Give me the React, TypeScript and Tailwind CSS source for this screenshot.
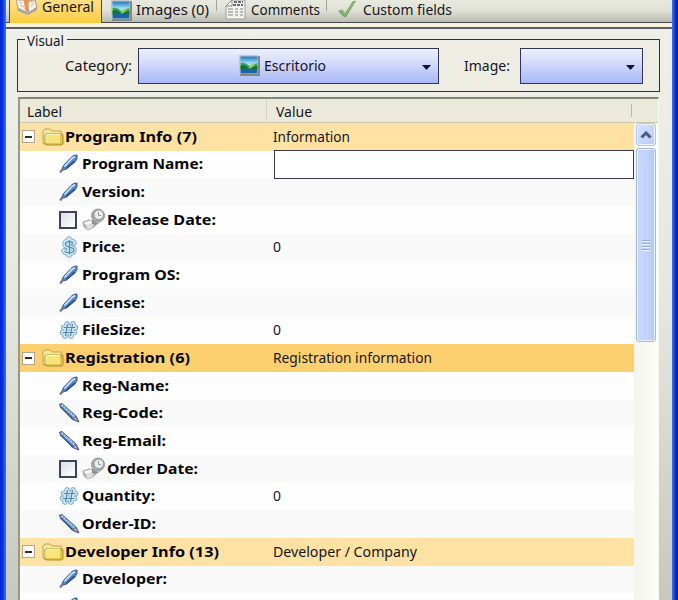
import type { ReactNode } from 'react'

type IconName = 'pen' | 'pencil' | 'date' | 'price' | 'hash'

type Row = {
  label: string
  value?: string
  valueWidth?: number
  icon?: IconName
  group?: boolean
  selected?: boolean
  editing?: boolean
  width: number
}

const rows: Row[] = [
  { label: 'Program Info (7)', value: 'Information', valueWidth: 77, group: true, width: 132 },
  { label: 'Program Name:', icon: 'pen', editing: true, width: 121 },
  { label: 'Version:', icon: 'pen', width: 63 },
  { label: 'Release Date:', icon: 'date', width: 109 },
  { label: 'Price:', icon: 'price', value: '0', valueWidth: 8, width: 43 },
  { label: 'Program OS:', icon: 'pen', width: 98 },
  { label: 'License:', icon: 'pen', width: 63 },
  { label: 'FileSize:', icon: 'hash', value: '0', valueWidth: 8, width: 63 },
  { label: 'Registration (6)', value: 'Registration information', valueWidth: 159, group: true, selected: true, width: 125 },
  { label: 'Reg-Name:', icon: 'pen', width: 87 },
  { label: 'Reg-Code:', icon: 'pencil', width: 81 },
  { label: 'Reg-Email:', icon: 'pencil', width: 84 },
  { label: 'Order Date:', icon: 'date', width: 91 },
  { label: 'Quantity:', icon: 'hash', value: '0', valueWidth: 8, width: 73 },
  { label: 'Order-ID:', icon: 'pencil', width: 74 },
  { label: 'Developer Info (13)', value: 'Developer / Company', valueWidth: 144, group: true, width: 154 },
  { label: 'Developer:', icon: 'pen', width: 85 },
  { label: '', icon: 'pen', width: 0 },
]

// Text set to an exact width, so labels keep the metrics of the native dialog font
function Label({ children, width, bold, y = 16 }: { children: string; width: number; bold?: boolean; y?: number }) {
  return (
    <svg width={width + 1} height="22" className="block shrink-0 overflow-visible">
      <text x="0" y={y} textLength={width} lengthAdjust="spacingAndGlyphs" fontSize="15" fontWeight={bold ? 700 : 400} fill={bold ? '#08080c' : '#15151c'}>
        {children}
      </text>
    </svg>
  )
}

function PictureIcon() {
  return (
    <svg width="21" height="21" viewBox="0 0 21 21" className="block shrink-0">
      <defs>
        <linearGradient id="sky" x1="0" y1="0" x2="0" y2="1">
          <stop offset="0" stopColor="#1c78c4" />
          <stop offset=".35" stopColor="#8fd2ee" />
          <stop offset=".6" stopColor="#d4f1f0" />
        </linearGradient>
      </defs>
      <path d="M1 1h20v20H1z" fill="#858984" />
      <path d="M0 0h19v19H0z" fill="#c3c8c2" />
      <path d="M1.500 1.500h17v17h-17z" fill="url(#sky)" />
      <path d="M1.500 8c4-1 6 1 9 3l8-3v6h-17z" fill="#3ba556" />
      <path d="M1.500 11c3-2 5-1 8 2 3 0 5-2 9-2v4h-17z" fill="#14733b" />
      <path d="M10 12c2-3 4-3 7-4l-3 4-4 2z" fill="#8ccf58" />
      <path d="M1.500 15c5-1 11-2 17 0v3.500h-17z" fill="#1c63a8" />
    </svg>
  )
}

function Folder() {
  return (
    <svg width="22" height="20" viewBox="0 0 22 20" className="block shrink-0">
      <path d="M1 16V4l2-2h5l2 2h9l1 2v9l-2 2H2z" fill="#f5e79c" stroke="#bda450" />
      <path d="M4 7h15l2 1v9l-2 1H5l-2-1V8z" fill="#e3c548" stroke="#a88d2f" />
      <path d="M4 8h14v8H5z" fill="#f8e47c" />
      <path d="M4 7.500h14M4 8v8" stroke="#fffac8" />
    </svg>
  )
}

function FieldIcon({ name }: { name: IconName }) {
  if (name === 'pen') {
    return (
      <svg width="20" height="20" viewBox="0 0 20 20" className="block shrink-0">
        <path d="M1.500 18l3-6.500L12 3.500l2.500-2 3.500-.5v3.500L16 8l-8.500 7-3.500 1z" fill="#5c86c4" stroke="#3a5690" />
        <path d="M5.500 12.500L13 4.500l3-2" stroke="#c4e4f7" strokeWidth="1.8" fill="none" />
        <path d="M7 14.500L15.500 7" stroke="#2f4f91" strokeWidth="1.500" />
        <path d="M1 18.500l3.500-4" stroke="#6f7a90" strokeWidth="2" />
      </svg>
    )
  }
  if (name === 'pencil') {
    return (
      <svg width="21" height="20" viewBox="0 0 21 20" className="block shrink-0">
        <path d="M0 1.500L3 .5 17 13l3 6-6.500-2.500z" fill="#6f8ec4" stroke="#4a5a88" />
        <path d="M2.500 2L16 14" stroke="#a9dbe4" strokeWidth="2" strokeDasharray="2 1" />
        <path d="M1 3.500l13 12.500" stroke="#3f5793" strokeWidth="1.500" />
        <path d="M14.500 16l2-2 2.500 4.500z" fill="#dcdde6" stroke="#56607e" strokeWidth=".7" />
      </svg>
    )
  }
  if (name === 'date') {
    return (
      <svg width="24" height="24" viewBox="0 0 24 24" className="block shrink-0">
        <path d="M1 14l6-2 5 1 3 2-3 4-6 3-4-3z" fill="#bdbdba" stroke="#a1a2a0" />
        <path d="M1.500 14.500l7-2 3.500 2-7 3z" fill="#f5f5f3" />
        <path d="M4.500 18l7.500-3-1.500 4.500-5 2.500z" fill="#dededb" />
        <path d="M10 9c0 5 5 7 9 5l-5 3-4-1z" fill="#8a8e8d" />
        <circle cx="16" cy="7.500" r="6.500" fill="#a5abaa" stroke="#979b9a" />
        <circle cx="16.800" cy="6.800" r="4.800" fill="#eceeee" stroke="#8f9796" />
        <path d="M16.500 4v3.500H19" stroke="#8b9895" fill="none" />
      </svg>
    )
  }
  if (name === 'price') {
    return (
      <svg width="20" height="22" viewBox="0 0 20 22" className="block shrink-0">
        <path d="M10 3v16M15 7c-2-3-9-3-9 1 0 4 9 2 9 6s-8 4-10 1" stroke="#7faac3" strokeWidth="5.500" strokeLinecap="round" fill="none" />
        <path d="M10 3v16M15 7c-2-3-9-3-9 1 0 4 9 2 9 6s-8 4-10 1" stroke="#cdebf6" strokeWidth="3.800" strokeLinecap="round" fill="none" />
        <path d="M10.500 4v14M14.500 7.500c-2-3-8-2-8 .5 0 4 8.500 2.500 8.500 6s-8 3.500-9.500 1" stroke="#5b8cb0" strokeWidth="1.300" fill="none" />
      </svg>
    )
  }
  return (
    <svg width="20" height="20" viewBox="0 0 20 20" className="block shrink-0">
      <path d="M8 4L6 16M14 4l-2 12M4.500 7.500h12M3.500 12.500h12" stroke="#7aa5bf" strokeWidth="5.500" strokeLinecap="round" />
      <path d="M8 4L6 16M14 4l-2 12M4.500 7.500h12M3.500 12.500h12" stroke="#cbe9f5" strokeWidth="3.800" strokeLinecap="round" />
      <path d="M8.500 4L6.500 16M13.500 4l-2 12M4.500 7.500h12M3.500 12.500h12" stroke="#5285a9" strokeWidth="1.200" />
    </svg>
  )
}

function ComboBox({ children, className }: { children?: ReactNode; className: string }) {
  return (
    <button className={`relative flex h-9 items-center border border-[#30345b] bg-linear-to-b from-[#eff0fd] via-[#cdd5fb] to-[#a9b8f4] ${className}`}>
      {children}
      <svg width="9" height="5" className="absolute right-[7px] top-4">
        <path d="M0 0h9L4.5 5z" fill="#10142d" />
      </svg>
    </button>
  )
}

function Tabs() {
  return (
    <div className="flex h-[22px] shrink-0 bg-linear-to-b from-[#e8e9df] via-[#dfe0d5] to-[#b9bab0]">
      <div className="relative ml-[3px] flex h-[23px] w-[93px] border-r border-l border-[#4c4b3d] bg-linear-to-b from-[#ffdf80] to-[#fccd3e] pl-[6px]">
        <svg width="23" height="17" viewBox="0 0 23 17" className="block shrink-0">
          <path d="M0 0h8l3 12-3-1-6-3z" fill="#f6f1ea" stroke="#b29a86" />
          <path d="M11 2l6-2h2l2 7-8 6z" fill="#fbf3ea" stroke="#a98f7d" />
          <path d="M8 0h5l-1 11-3-1z" fill="#e59650" />
          <path d="M1 8l10 5 10-6v3l-9 5L2 11z" fill="#9fa3b2" />
          <path d="M3 2l3 1M4 5l4 2M15 3l3-1M15 6l3-2" stroke="#c0b8b0" />
        </svg>
        <div className="ml-[3px]"><Label width={52} y={12}>General</Label></div>
      </div>
      <div className="flex w-[114px] pl-[9px]">
        <PictureIcon />
        <div className="ml-[4px]"><Label width={73} y={15}>Images (0)</Label></div>
        <div className="ml-[6px] h-[11px] w-px shrink-0 bg-[#a4a399]" />
      </div>
      <div className="flex w-[112px] pl-[9px]">
        <svg width="21" height="20" viewBox="0 0 21 20" className="block shrink-0">
          <path d="M7 0h13v19H1V6z" fill="#f1f1ee" stroke="#a0a09d" />
          <path d="M9 2h9M8 5h10" stroke="#6a6a6a" strokeWidth="2" strokeDasharray="3 1" />
          <path d="M3 9h5M3 12h5M3 15h5M10 9h3M10 12h3M10 15h3M15 9h3M15 12h3M15 15h3" stroke="#82827e" />
          <path d="M1 6h6V0z" fill="#fafaf7" stroke="#888985" />
        </svg>
        <div className="ml-[5px]"><Label width={69} y={15}>Comments</Label></div>
        <div className="ml-[5px] h-[11px] w-px shrink-0 bg-[#a4a399]" />
      </div>
      <div className="flex pl-[9px]">
        <svg width="20" height="20" viewBox="0 0 20 20" className="block shrink-0">
          <path d="M1 11l4-1.500 3 3.500L16 1l3 0L9 17H7z" fill="#72a55e" />
          <path d="M2.500 11.500l2.500-.5 3 4L17 2" fill="none" stroke="#9bc287" />
        </svg>
        <div className="ml-[6px]"><Label width={89} y={15}>Custom fields</Label></div>
      </div>
    </div>
  )
}

function PropertyRow({ row, index }: { row: Row; index: number }) {
  const bg = row.selected ? 'bg-[#fdd06f]' : row.group ? 'bg-[#fee2a3]' : index % 2 ? 'bg-[#fefefe]' : 'bg-[#f9f9f9]'
  return (
    <div className={`flex h-[27.67px] shrink-0 items-center ${bg} ${row.editing ? 'relative z-10' : ''}`}>
      {row.group ? (
        <div className="flex w-[253px] items-center pl-[2px]">
          <div className="flex size-[13px] items-center justify-center border border-[#b4a58c] bg-[#fffef8]">
            <div className="h-[2px] w-[7px] bg-[#332c28]" />
          </div>
          <div className="ml-[7px]"><Folder /></div>
          <div className="ml-[1px]"><Label bold width={row.width}>{row.label}</Label></div>
        </div>
      ) : (
        <div className="flex w-[253px] items-center pl-[39px]">
          {row.icon === 'date' && <div className="mr-[5px] size-[18px] border-2 border-[#3d435c] bg-linear-to-br from-[#dcdde6] to-white" />}
          {row.icon && <div className={row.icon === 'date' ? 'w-6' : 'w-5'}><FieldIcon name={row.icon} /></div>}
          <div className={row.icon === 'date' ? 'ml-px' : 'ml-[3px]'}><Label bold width={row.width}>{row.label}</Label></div>
        </div>
      )}
      {row.editing && <input aria-label={row.label} className="ml-px mt-[1px] h-[29px] w-[360px] shrink-0 border-[1.5px] border-[#37374e] bg-white outline-none" />}
      {row.value && <Label width={row.valueWidth ?? 0}>{row.value}</Label>}
    </div>
  )
}

function ScrollBar() {
  return (
    <div className="h-full w-6 shrink-0 bg-linear-to-r from-[#f4f4ee] to-[#fffffa] pl-[2px]">
      <div className="flex h-[23px] w-[20px] items-center justify-center rounded-[3px] border border-[#b3c7ee] bg-linear-to-br from-[#d6e2ff] to-[#b8cbfa] shadow-[inset_0_0_0_1px_#edf3ff]">
        <svg width="12" height="8" viewBox="0 0 12 8">
          <path d="M1.500 6.500L6 2l4.500 4.500" fill="none" stroke="#4a5b87" strokeWidth="3" />
        </svg>
      </div>
      <div className="mt-[2px] flex h-[194px] w-[20px] flex-col items-center justify-center gap-[2px] rounded-[3px] border border-[#a4b9dc] bg-linear-to-r from-[#c7d7ff] via-[#c3d3fe] to-[#b1c8f7] shadow-[inset_0_0_0_1px_#e9f1ff]">
        {[0, 1, 2, 3].map(i => <div key={i} className="h-px w-2 bg-[#91abe0] shadow-[0_1px_#edf5ff]" />)}
      </div>
    </div>
  )
}

export default function App() {
  return (
    <div className="flex h-[600px] w-[678px] overflow-hidden bg-[#eceee7] font-['Noto_Sans',sans-serif] text-[15px]">
      <div className="w-[6px] shrink-0 bg-linear-to-r from-[#0025d0] via-[#0636e5] to-[#4b74dd]" />
      <main className="flex w-[666px] shrink-0 flex-col overflow-hidden bg-linear-to-b from-[#f0f0eb] via-[#e6e8dd] to-[#c8c8bc]">
        <Tabs />
        <div className="h-[7px] shrink-0 border-t-[1.5px] border-b-2 border-[#454753] border-b-[#5b5d66] bg-[#f8f2dc]" />
        <section className="relative ml-[11px] mt-[10px] flex h-[53px] w-[643px] shrink-0 items-center border border-[#2e313d] bg-[#eeede3]">
          <div className="absolute left-[7px] top-[-10px] bg-[#efefeb] px-[2px]"><Label width={37}>Visual</Label></div>
          <div className="ml-[47px]"><Label width={67}>Category:</Label></div>
          <ComboBox className="ml-[5px] w-[301px] pl-[100px]">
            <PictureIcon />
            <div className="ml-[4px]"><Label width={62}>Escritorio</Label></div>
          </ComboBox>
          <div className="ml-[25px]"><Label width={46}>Image:</Label></div>
          <ComboBox className="ml-[9px] w-[123px]" />
        </section>
        <section className="ml-[12px] mt-[5px] flex h-[503px] w-[641px] shrink-0 flex-col border-t-2 border-r border-l-2 border-t-[#858579] border-r-[#f8f8ef] border-l-[#97978a]">
          <header className="flex h-[24px] shrink-0 items-center border-b border-[#cbc8ad] bg-[#ebeada]">
            <div className="flex h-full w-[247px] items-center border-r border-[#d5d3c1] pl-[7px]"><Label width={35} y={17}>Label</Label></div>
            <div className="flex w-[364px] items-center pl-[9px]"><Label width={36} y={17}>Value</Label></div>
            <div className="h-[13px] w-px bg-[#b9b7a7]" />
          </header>
          <div className="flex min-h-0 flex-1">
            <div className="flex w-[614px] shrink-0 flex-col overflow-hidden">
              {rows.map((row, index) => <PropertyRow key={index} row={row} index={index} />)}
            </div>
            <ScrollBar />
          </div>
        </section>
      </main>
      <div className="w-[6px] shrink-0 bg-linear-to-r from-[#4777e8] via-[#0538cf] to-[#001e9e]" />
    </div>
  )
}
